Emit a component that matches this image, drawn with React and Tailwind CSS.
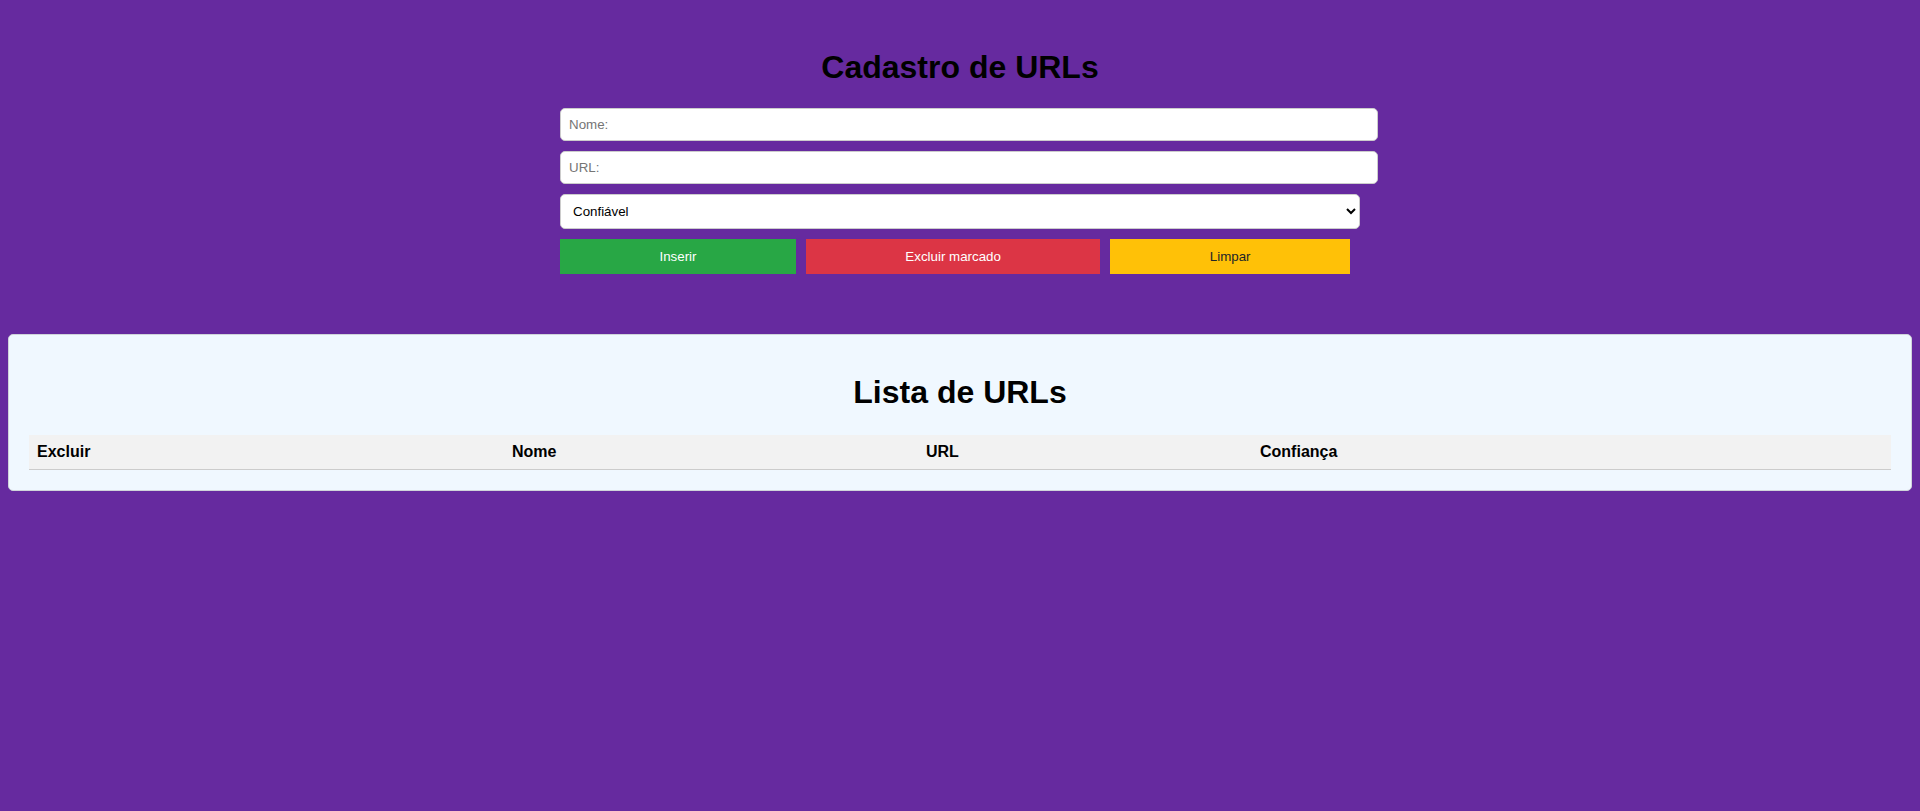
import { useState } from 'react';

export default function App() {
  const [nome, setNome] = useState('');
  const [url, setUrl] = useState('');
  const [confianca, setConfianca] = useState('Confiável');

  return (
    <div className="min-h-screen bg-[#662a9f] px-2 pt-[49px] font-['Liberation_Sans',Arial,sans-serif]">
      {/* Cadastro */}
      <div className="mx-auto w-[800px]">
        <h1 className="text-center text-[32px] font-bold leading-[37px] text-black">Cadastro de URLs</h1>
        <div className="mt-[22px]">
          <input
            type="text"
            value={nome}
            onChange={(e) => setNome(e.target.value)}
            placeholder="Nome:"
            className="mb-[10px] block h-[33px] w-[818px] rounded-[5px] border border-[#ccc] bg-white px-2 text-[13.33px] text-black outline-none placeholder:text-[#757575]"
          />
          <input
            type="text"
            value={url}
            onChange={(e) => setUrl(e.target.value)}
            placeholder="URL:"
            className="mb-[10px] block h-[33px] w-[818px] rounded-[5px] border border-[#ccc] bg-white px-2 text-[13.33px] text-black outline-none placeholder:text-[#757575]"
          />
          <select
            value={confianca}
            onChange={(e) => setConfianca(e.target.value)}
            className="mb-[10px] block h-[35px] w-full rounded-[5px] border border-[#ccc] bg-white px-2 text-[13.33px] text-black"
          >
            <option>Confiável</option>
            <option>Não confiável</option>
          </select>
          <div className="flex">
            <button className="mr-[10px] h-[35px] flex-auto bg-[#28a745] px-5 text-[13.33px] text-white">Inserir</button>
            <button className="mr-[10px] h-[35px] flex-auto bg-[#dc3545] px-5 text-[13.33px] text-white">Excluir marcado</button>
            <button className="mr-[10px] h-[35px] flex-auto bg-[#ffc107] px-5 text-[13.33px] text-[#212529]">Limpar</button>
          </div>
        </div>
      </div>

      {/* Lista */}
      <div className="mt-[60px] rounded-[5px] border border-[#cfd4da] bg-[#f0f8ff] p-5">
        <h2 className="mt-[19px] text-center text-[32px] font-bold leading-[37px] text-black">Lista de URLs</h2>
        <table className="mt-6 w-full table-fixed border-collapse text-left">
          <colgroup>
            <col className="w-[475px]" />
            <col className="w-[414px]" />
            <col className="w-[334px]" />
            <col />
          </colgroup>
          <thead>
            <tr className="border-b border-[#ccc] bg-[#f2f2f2]">
              <th className="h-[34px] px-2 text-[16px] font-bold text-black">Excluir</th>
              <th className="h-[34px] px-2 text-[16px] font-bold text-black">Nome</th>
              <th className="h-[34px] px-2 text-[16px] font-bold text-black">URL</th>
              <th className="h-[34px] px-2 text-[16px] font-bold text-black">Confiança</th>
            </tr>
          </thead>
          <tbody />
        </table>
      </div>
    </div>
  );
}
